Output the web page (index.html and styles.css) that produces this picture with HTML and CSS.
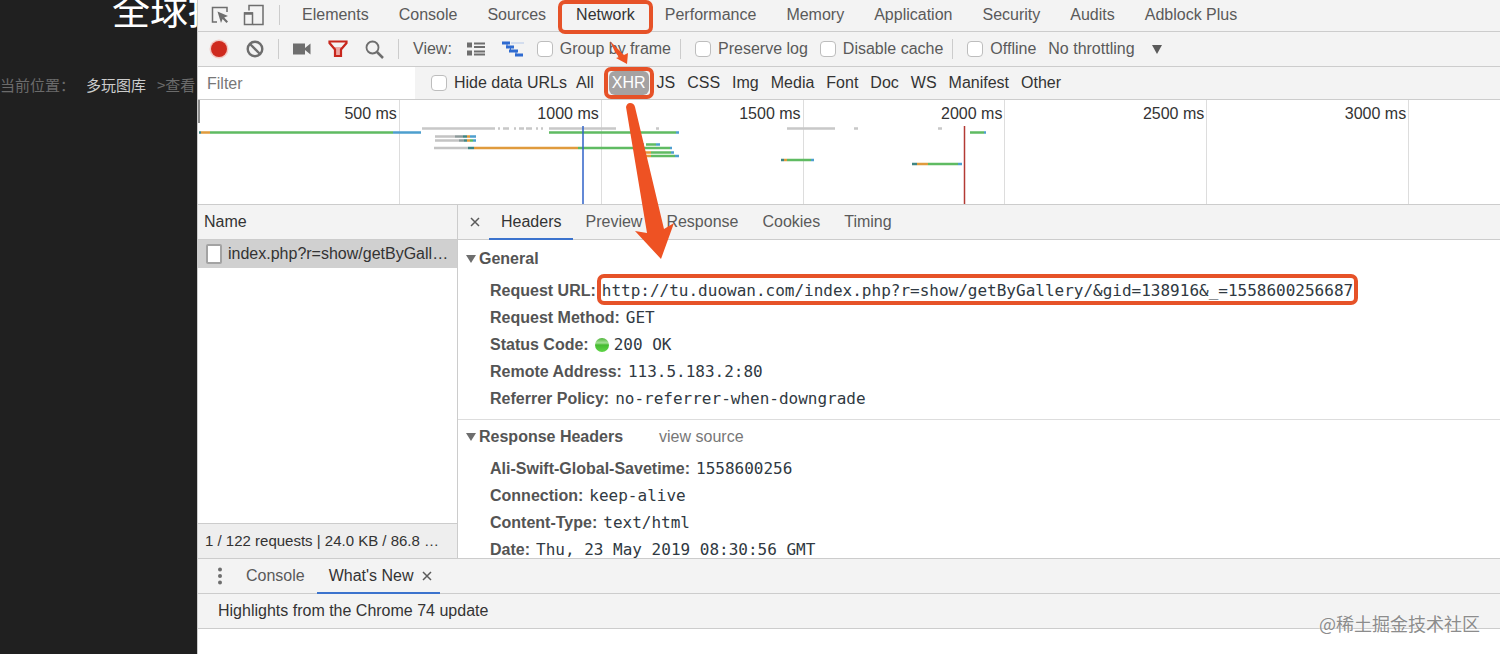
FILE: index.html
```html
<!DOCTYPE html>
<html lang="zh-CN">
<head>
    <meta charset="UTF-8">
    <meta name="viewport" content="width=device-width, initial-scale=1.0">
    <title>Network - XHR</title>
    <link rel="stylesheet" href="styles.css">
</head>
<body>

<aside class="site">
    <h1>全球搞</h1>
    <nav class="breadcrumb">
        <span>当前位置：</span>
        <a href="#">多玩图库</a>
        <span>&gt;查看</span>
    </nav>
</aside>

<main class="devtools">
    <!-- Main tabs -->
    <div class="bar main-tabs">
        <button class="icon-btn" aria-label="Inspect">
            <svg width="18" height="18" viewBox="0 0 18 18"><path d="M16 6V1.5H1.5V16H6" fill="none" stroke="#6e6e6e" stroke-width="1.5"/><path d="M6.500 5.500L17 10l-3.800 1.500 3.800 3.900-1.500 1.500-3.900-3.900L10 17z" fill="#6e6e6e"/></svg>
        </button>
        <button class="icon-btn" aria-label="Device mode">
            <svg width="22" height="22" viewBox="0 0 22 22" fill="none" stroke="#6e6e6e"><path d="M6 6.500V1.500H20V20.500H10" stroke-width="1.500"/><rect x="1.500" y="9" width="8" height="11.500" stroke-width="1.500"/><path d="M1 9.500h9" stroke-width="2.500"/></svg>
        </button>
        <span class="divider"></span>
        <div class="tabs">
            <button>Elements</button>
            <button>Console</button>
            <button>Sources</button>
            <button class="active marked">Network</button>
            <button>Performance</button>
            <button>Memory</button>
            <button>Application</button>
            <button>Security</button>
            <button>Audits</button>
            <button>Adblock Plus</button>
        </div>
    </div>

    <!-- Network toolbar -->
    <div class="bar toolbar">
        <button class="icon-btn" aria-label="Record">
            <svg width="20" height="20" viewBox="0 0 20 20"><circle cx="10" cy="10" r="9.500" fill="#f3c9c4"/><circle cx="10" cy="10" r="8" fill="#cf2a1e"/></svg>
        </button>
        <button class="icon-btn" aria-label="Clear">
            <svg width="18" height="18" viewBox="0 0 18 18" fill="none" stroke="#6e6e6e" stroke-width="2.400"><circle cx="9" cy="9" r="7.300"/><path d="M4 4l10 10"/></svg>
        </button>
        <span class="divider"></span>
        <button class="icon-btn" aria-label="Capture screenshots">
            <svg width="18" height="12" viewBox="0 0 18 12" fill="#6e6e6e"><path d="M0 .5h12v11H0zM12 5l5.500-4.500v11L12 7z"/></svg>
        </button>
        <button class="icon-btn" aria-label="Filter">
            <svg width="20" height="18" viewBox="0 0 20 18"><path d="M6 7h8l-1.500 3v6h-5v-6z" fill="#eda6a2"/><path d="M1.500 1.500h17v1.500L13 9.500V16H7V9.500L1.500 3z" fill="none" stroke="#c8271d" stroke-width="2.200"/></svg>
        </button>
        <button class="icon-btn" aria-label="Search">
            <svg width="19" height="19" viewBox="0 0 19 19" fill="none" stroke="#6e6e6e"><circle cx="7.500" cy="7.500" r="6" stroke-width="1.800"/><path d="M12 12l6 6" stroke-width="2.500"/></svg>
        </button>
        <span class="divider"></span>
        <span class="view-label">View:</span>
        <button class="icon-btn" aria-label="Large rows">
            <svg width="18" height="14" viewBox="0 0 18 14" fill="#6e6e6e"><path d="M0 .5h5v5H0zM7 .5h11v2H7zM7 4h11v2H7zM0 8.500h5v5H0zM7 8.500h11v2H7zM7 11.500h11v2H7z"/></svg>
        </button>
        <button class="icon-btn overview-btn" aria-label="Overview">
            <svg width="22" height="16" viewBox="0 0 22 16"><path d="M9 2h13" stroke="#c9d6ec" stroke-width="1.500"/><path d="M0 2h8M4 6h8M7 10h9M13 14h8" stroke="#2f6bd0" stroke-width="2.800"/><path d="M5 2v4M8.500 6v4M14 10v4" stroke="#2f6bd0"/></svg>
        </button>
        <label class="check"><input type="checkbox">Group by frame</label>
        <span class="divider"></span>
        <label class="check"><input type="checkbox">Preserve log</label>
        <label class="check"><input type="checkbox">Disable cache</label>
        <span class="divider"></span>
        <label class="check"><input type="checkbox">Offline</label>
        <select class="throttling" aria-label="Throttling">
            <option>No throttling</option>
        </select>
        <svg class="caret" width="10" height="9" viewBox="0 0 10 9"><path d="M0 0h10L5 9z" fill="#5a5a5a"/></svg>
    </div>

    <!-- Filter row -->
    <div class="bar filter-bar">
        <input class="filter-input" type="text" placeholder="Filter" aria-label="Filter">
        <label class="check"><input type="checkbox">Hide data URLs</label>
        <div class="types">
            <button>All</button>
            <button class="selected marked">XHR</button>
            <button>JS</button>
            <button>CSS</button>
            <button>Img</button>
            <button>Media</button>
            <button>Font</button>
            <button>Doc</button>
            <button>WS</button>
            <button>Manifest</button>
            <button>Other</button>
        </div>
    </div>

    <!-- Timeline overview -->
    <div class="overview">
        <div class="ruler">
            <span>500 ms</span>
            <span>1000 ms</span>
            <span>1500 ms</span>
            <span>2000 ms</span>
            <span>2500 ms</span>
            <span>3000 ms</span>
        </div>
        <svg class="chart" viewBox="0 0 1302 104" preserveAspectRatio="none" fill="none" stroke-width="2.500">
            <path d="M1 0v23" stroke="#8f8f8f" stroke-width="2"/>
            <path d="M224 28.500h73M300 28.500h2M305 28.500h6M316 28.500h2M321 28.500h5M328 28.500h6M338 28.500h2M343 28.500h2M351 28.500h67M439 28.500h2M458 28.500h3M589 28.500h48M656 28.500h4M740 28.500h4" stroke="#c8c8c8"/>
            <path d="M237 36.500h20M237 40.500h24M236 48h34" stroke="#c4c4c4"/>
            <path d="M257 36.500h8M261 40.500h5" stroke="#8d9a9a"/>
            <path d="M1 32.500h2M265 36.500h4M266 40.500h3M270 48h6M583 60h3M714 64h5" stroke="#3f8583"/>
            <path d="M3 32.500h9M269 36.500h3M269 40.500h3M276 48h104M446 52.500h7M446 56h7M586 60h3M719 64h11" stroke="#e09b3d"/>
            <path d="M12 32.500h183M272 40.500h3M351 32.500h127M380 48h92M448 44.500h10M453 52.500h20M453 56h24M589 60h24M730 64h30M772 32.500h14" stroke="#5fbb62"/>
            <path d="M195 32.500h28M272 36.500h6M275 40.500h3M478 32.500h3M441 40.500h3M444 44.500h2M458 44.500h4M472 48h2M473 52.500h3M477 56h4M613 60h3M760 64h4M786 32.500h2" stroke="#4d9fce"/>
            <path d="M385 26v78" stroke="#2f62c8" stroke-width="1.500"/>
            <path d="M766.500 26v78" stroke="#b33a34" stroke-width="1.500"/>
        </svg>
    </div>

    <div class="split">
        <section class="requests">
            <h2 class="panel-head">Name</h2>
            <div class="request selected">
                <span class="file-icon"></span>
                <span>index.php?r=show/getByGall…</span>
            </div>
            <p class="summary">1 / 122 requests | 24.0 KB / 86.8 …</p>
        </section>

        <section class="details">
            <div class="panel-head detail-tabs">
                <button class="close" aria-label="Close">
                    <svg width="10" height="10" viewBox="0 0 10 10"><path d="M1 1l8 8M9 1L1 9" stroke="#5a5a5a" stroke-width="1.500"/></svg>
                </button>
                <button class="active">Headers</button>
                <button>Preview</button>
                <button>Response</button>
                <button>Cookies</button>
                <button>Timing</button>
            </div>
            <div class="detail-body">
                <div class="group">
                    <h3><i class="arrow"></i>General</h3>
                    <dl>
                        <div><dt>Request URL:</dt><dd class="marked">http://tu.duowan.com/index.php?r=show/getByGallery/&amp;gid=138916&amp;_=1558600256687</dd></div>
                        <div><dt>Request Method:</dt><dd>GET</dd></div>
                        <div><dt>Status Code:</dt><dd><i class="status-dot"></i>200 OK</dd></div>
                        <div><dt>Remote Address:</dt><dd>113.5.183.2:80</dd></div>
                        <div><dt>Referrer Policy:</dt><dd>no-referrer-when-downgrade</dd></div>
                    </dl>
                </div>
                <div class="group">
                    <h3><i class="arrow"></i>Response Headers <button class="view-source">view source</button></h3>
                    <dl>
                        <div><dt>Ali-Swift-Global-Savetime:</dt><dd>1558600256</dd></div>
                        <div><dt>Connection:</dt><dd>keep-alive</dd></div>
                        <div><dt>Content-Type:</dt><dd>text/html</dd></div>
                        <div><dt>Date:</dt><dd>Thu, 23 May 2019 08:30:56 GMT</dd></div>
                    </dl>
                </div>
            </div>
        </section>
    </div>

    <!-- Drawer -->
    <section class="drawer">
        <div class="drawer-tabs">
            <button class="more" aria-label="More">
                <svg width="4" height="18" viewBox="0 0 4 18" fill="#6e6e6e"><circle cx="2" cy="2.500" r="2"/><circle cx="2" cy="9" r="2"/><circle cx="2" cy="15.500" r="2"/></svg>
            </button>
            <button>Console</button>
            <button class="active">What's New
                <svg width="10" height="10" viewBox="0 0 10 10"><path d="M1 1l8 8M9 1L1 9" stroke="#5a5a5a" stroke-width="1.500"/></svg>
            </button>
        </div>
        <p class="highlights">Highlights from the Chrome 74 update</p>
        <div class="drawer-body"></div>
    </section>

    <!-- Hand-drawn arrows over the panels -->
    <svg class="arrows" width="500" height="270" viewBox="0 0 500 270" fill="#ee5223">
        <path d="M412 41L421 50L426 55L430 53L429 64L418 58L421 57L417 52Z"/>
        <path d="M428 107Q429 103 432 103Q436 103 437 107L466 229L476 223L463 259L437 231L449 233Z"/>
    </svg>
</main>

<div class="watermark">@稀土掘金技术社区</div>

</body>
</html>
```

FILE: styles.css
```css
* {
    margin: 0;
    padding: 0;
    box-sizing: border-box;
}

body {
    display: flex;
    height: 100vh;
    overflow: hidden;
    position: relative;
    font-family: "Liberation Sans", "Noto Sans CJK SC", sans-serif;
    font-size: 16px;
    line-height: 20px;
    color: #333;
    background-color: #202020;
}

button,
input,
select {
    font: inherit;
    color: inherit;
    background: none;
    border: none;
}

button {
    cursor: pointer;
    white-space: nowrap;
}

svg {
    display: block;
}

/* Page behind the dev tools */
.site {
    width: 197px;
    flex: none;
    overflow: hidden;
    white-space: nowrap;
    font-family: "Noto Sans CJK SC", sans-serif;
    color: #6b6b6b;
}

.site h1 {
    margin: -12px 0 0 112px;
    font-size: 38px;
    line-height: 40px;
    font-weight: 400;
    color: #fff;
}

.breadcrumb {
    display: flex;
    gap: 11px;
    margin-top: 47px;
    font-size: 15px;
}

.breadcrumb a {
    color: #ccc;
    text-decoration: none;
}

/* Dev tools shell */
.devtools {
    flex: 1;
    min-width: 0;
    display: flex;
    flex-direction: column;
    position: relative;
    background-color: #f3f3f3;
    border-left: 1px solid #ccc;
}

.bar {
    display: flex;
    align-items: center;
    flex: none;
    border-bottom: 1px solid #ccc;
    white-space: nowrap;
}

.divider {
    width: 1px;
    height: 20px;
    background-color: #ccc;
}

.main-tabs {
    height: 32px;
    padding: 0 0 2px 13px;
    gap: 14px;
    color: #5a5a5a;
}

.tabs {
    display: flex;
    gap: 30px;
    margin-left: 8px;
}

.active {
    color: #333;
}

.toolbar {
    height: 35px;
    padding-left: 11px;
    gap: 17px;
    color: #5a5a5a;
}

.toolbar .divider {
    margin: 0 -3px;
}

.view-label {
    margin-right: -2px;
}

.overview-btn {
    margin-right: -4px;
}

.check {
    display: flex;
    align-items: center;
    gap: 7px;
}

.toolbar .check {
    margin-right: -5px;
}

.check input {
    appearance: none;
    width: 16px;
    height: 16px;
    border: 1px solid #bdbdbd;
    border-radius: 4px;
    background-color: #fff;
}

.throttling {
    appearance: none;
}

/* Filter row */
.filter-bar {
    height: 33px;
}

.filter-input {
    width: 217px;
    height: 32px;
    padding: 2px 0 0 9px;
    margin-right: 16px;
    background-color: #fff;
}

.filter-input::placeholder {
    color: #777;
}

.types {
    display: flex;
    gap: 12px;
    margin-left: 9px;
}

.types button {
    padding: 2px 0;
}

.types .selected {
    margin: 0 -4px 0 3px;
    padding: 2px 3px;
    border-radius: 6px;
    background-color: #a5a2a2;
    color: #fff;
}

/* Red boxes around the interesting parts */
.marked {
    position: relative;
}

.marked::after {
    content: "";
    position: absolute;
    inset: -4px -5px;
    border: 4px solid #e65228;
    border-radius: 7px;
    pointer-events: none;
}

.tabs .marked::after {
    inset: -5px -18px -9px;
}

.group .marked::after {
    inset: -7px -5px -4px;
}

/* Timeline */
.overview {
    flex: none;
    height: 105px;
    position: relative;
    background-color: #fff;
    border-bottom: 1px solid #ccc;
}

.ruler {
    display: grid;
    grid-template-columns: repeat(6, 20fr) 9fr;
    height: 100%;
    text-align: right;
}

.ruler span {
    padding: 4px 2px 0 0;
    border-right: 1px solid #ddd;
}

.chart {
    position: absolute;
    top: 0;
    left: 0;
    width: 100%;
    height: 100%;
}

/* Request list and details */
.split {
    flex: 1;
    min-height: 0;
    display: flex;
    background-color: #fff;
}

.panel-head {
    height: 35px;
    flex: none;
    border-bottom: 1px solid #ccc;
    background-color: #f3f3f3;
    font-size: 16px;
    font-weight: normal;
}

.requests {
    width: 260px;
    flex: none;
    display: flex;
    flex-direction: column;
    border-right: 1px solid #ccc;
}

.requests .panel-head {
    padding: 7px 6px;
}

.request {
    display: flex;
    align-items: center;
    gap: 6px;
    height: 28px;
    padding-left: 8px;
    white-space: nowrap;
}

.request.selected {
    background-color: #d0d0d0;
}

.file-icon {
    width: 16px;
    height: 20px;
    border: 2px solid #a3a3a3;
    border-radius: 2px;
    background-color: #fff;
}

.summary {
    margin-top: auto;
    padding: 7px 0 7px 7px;
    border-top: 1px solid #ccc;
    background-color: #eee;
    font-size: 15px;
    white-space: nowrap;
    overflow: hidden;
}

.details {
    flex: 1;
    min-width: 0;
    display: flex;
    flex-direction: column;
}

.detail-tabs {
    display: flex;
    color: #5a5a5a;
}

.detail-tabs button {
    padding: 0 12px;
    margin-bottom: -1px;
    border-bottom: 2px solid transparent;
}

.detail-tabs .active,
.drawer-tabs .active {
    color: #333;
    border-bottom-color: #3b73cd;
}

.detail-tabs .close {
    padding: 0 9px 0 12px;
}

.detail-body {
    flex: 1;
    min-height: 0;
    overflow: hidden;
    padding-top: 2px;
}

.group {
    padding: 4px 8px 7px;
    border-bottom: 1px solid #ddd;
}

.group h3 {
    display: flex;
    align-items: center;
    height: 26px;
    margin-bottom: 5px;
    font-size: 16px;
    color: #545454;
}

.arrow {
    margin-right: 3px;
    border: 5px solid transparent;
    border-top: 8px solid #6e6e6e;
    border-bottom: none;
}

.view-source {
    margin-left: 36px;
    font-weight: normal;
    color: #777;
}

.group dl {
    padding-left: 24px;
}

.group dl div {
    display: flex;
    align-items: center;
    gap: 6px;
    height: 27px;
    white-space: nowrap;
}

.group dt {
    font-weight: bold;
    color: #545454;
}

.group dd {
    display: flex;
    align-items: center;
    font-family: "DejaVu Sans Mono", monospace;
    color: #303942;
}

.status-dot {
    width: 14px;
    height: 14px;
    margin-right: 5px;
    border-radius: 50%;
    background: linear-gradient(#4fb53a, #a5e096 35%, #45bb30 50%, #5fd548);
}

/* Drawer */
.drawer {
    flex: none;
}

.drawer-tabs {
    display: flex;
    height: 36px;
    padding-left: 8px;
    border-top: 1px solid #ccc;
    border-bottom: 1px solid #ccc;
    color: #5a5a5a;
}

.drawer-tabs button {
    display: flex;
    align-items: center;
    gap: 8px;
    padding: 0 12px;
    margin-bottom: -1px;
    border-bottom: 2px solid transparent;
}

.drawer-tabs .active {
    padding: 0 8px 0 12px;
}

.highlights {
    padding: 7px 20px;
    border-bottom: 1px solid #ccc;
}

.drawer-body {
    height: 25px;
    background-color: #fff;
}

.arrows {
    position: absolute;
    top: 0;
    left: 0;
    pointer-events: none;
}

.watermark {
    position: absolute;
    right: 20px;
    bottom: 21px;
    font-size: 18px;
    font-family: "Noto Sans CJK SC", sans-serif;
    font-weight: 400;
    color: #8c8c8c;
    text-shadow: 0 0 2px #fff;
}
```
